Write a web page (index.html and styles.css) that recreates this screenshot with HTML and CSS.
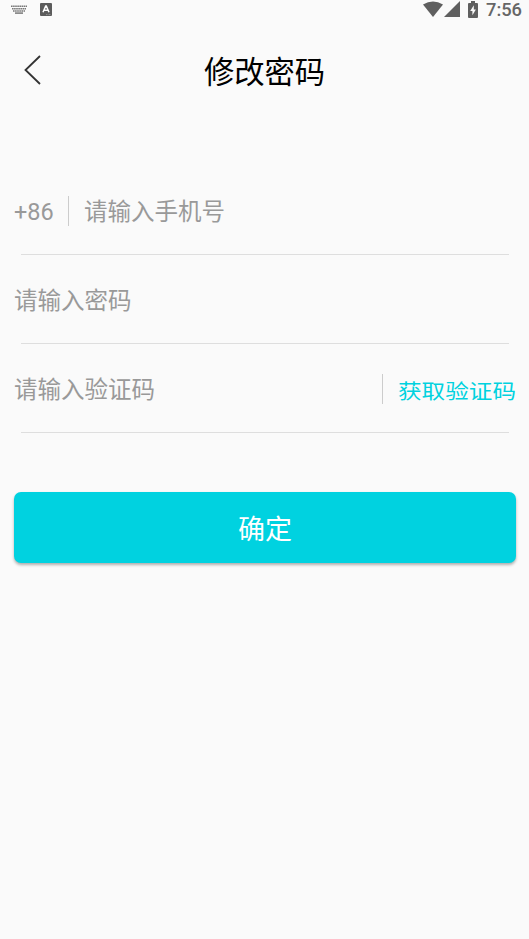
FILE: index.html
```html
<!DOCTYPE html>
<html lang="zh-CN">
<head>
<meta charset="utf-8">
<title>修改密码</title>
<link rel="stylesheet" href="styles.css">
</head>
<body>
<div class="status">
  <svg class="keyboard" width="16" height="9" viewBox="0 0 16 9" fill="none" stroke="#777" stroke-width="1.5">
    <path d="M0 1.2H16M1 3.7H15" stroke-dasharray="1.6 .5"/><path d="M2 6.1H14" stroke-dasharray="1.6 .5"/><path d="M4 8.1H12"/>
  </svg>
  <svg class="input-badge" width="12" height="13" viewBox="0 0 12 13">
    <rect width="12" height="13" rx="1" fill="#5c5c5c"/>
    <path d="M3 9.3 5.7 3h.6L9 9.3M4.1 7.2h3.8" fill="none" stroke="#fff" stroke-width="1.5"/>
    <path d="M6 11.6h5" stroke="#aaa" stroke-width=".7" stroke-dasharray="1 .5"/>
  </svg>
  <svg class="wifi" width="20" height="16" viewBox="0 0 20 16"><path d="M0 3.6Q10-2.8 20 3.6L10 16Z" fill="#5f5f5f"/></svg>
  <svg class="signal" width="16" height="16" viewBox="0 0 16 16"><path d="M16 0V16H0Z" fill="#5f5f5f"/></svg>
  <svg class="battery" width="10" height="17" viewBox="0 0 10 17">
    <path d="M3 0h4v2h2q1 0 1 1v13q0 1-1 1H1q-1 0-1-1V3q0-1 1-1h2Z" fill="#5f5f5f"/>
    <path d="M5.8 4.2 2.2 10h2.2v4.3L7.9 8.6H5.8Z" fill="#fafafa"/>
  </svg>
  <span class="time">7:56</span>
</div>
<header class="header">
  <svg class="back" width="18" height="32" viewBox="0 0 18 32"><path d="M17 2 2.5 16 17 30" fill="none" stroke="#333" stroke-width="1.8"/></svg>
  <h1 class="title">修改密码</h1>
</header>
<main class="form">
  <div class="row"><span class="code">+86</span><i class="divider"></i><span class="hint">请输入手机号</span></div>
  <div class="row"><span class="hint">请输入密码</span></div>
  <div class="row"><span class="hint">请输入验证码</span><i class="divider divider-end"></i><span class="get-code">获取验证码</span></div>
  <button class="submit">确定</button>
</main>
</body>
</html>
```
FILE: styles.css
```css
* { box-sizing: border-box; }
body {
  margin: 0;
  height: 939px;
  background: #fafafa;
  color: #999;
  font-family: Roboto, "Noto Sans CJK SC", sans-serif;
  overflow: hidden;
}
svg { display: block; flex: none; }
.status {
  display: flex;
  height: 20px;
  padding: 1px 7px 0 11px;
  align-items: flex-start;
}
.keyboard { margin-top: 4px; }
.input-badge { margin: 2px 0 0 13px; }
.wifi { margin-left: auto; }
.signal { margin-left: 1px; }
.battery { margin-left: 8px; }
.time {
  margin-left: 8px;
  font-size: 18.3px;
  line-height: 18px;
  font-weight: 500;
  color: #666;
}
.header {
  display: grid;
  grid-template-columns: 60px 1fr 60px;
  height: 102px;
  align-items: center;
}
.back { margin: -2px 0 0 23px; }
.title {
  margin: 4px 0 0;
  color: #000;
  font-size: 30.3px;
  line-height: 40px;
  font-weight: 400;
  text-align: center;
}
.form { padding: 44px 13px 0 14px; }
.row {
  display: flex;
  height: 89px;
  align-items: center;
  background: linear-gradient(#dedede, #dedede) 7px 100% / calc(100% - 14px) 1px no-repeat;
}
.code { width: 40px; padding-top: 2px; font-size: 23.5px; line-height: 32px; }
.hint { padding-top: 2px; font-size: 23.5px; line-height: 32px; }
.divider {
  width: 1px;
  height: 30px;
  margin: 0 15px 0 14px;
  background: #ccc;
}
.divider-end { margin-left: auto; }
.get-code {
  margin-top: 6px;
  color: #00d2df;
  font-size: 23.6px;
  line-height: 32px;
  transform: scaleY(.88);
}
.submit {
  display: block;
  width: 100%;
  height: 71px;
  margin-top: 59px;
  padding: 0;
  border: 0;
  border-radius: 7px;
  background: #00d2e0;
  box-shadow: 0 2px 3px rgba(0, 0, 0, .3);
  color: #fff;
  font: 400 27px/40px "Noto Sans CJK SC", sans-serif;
}
```
